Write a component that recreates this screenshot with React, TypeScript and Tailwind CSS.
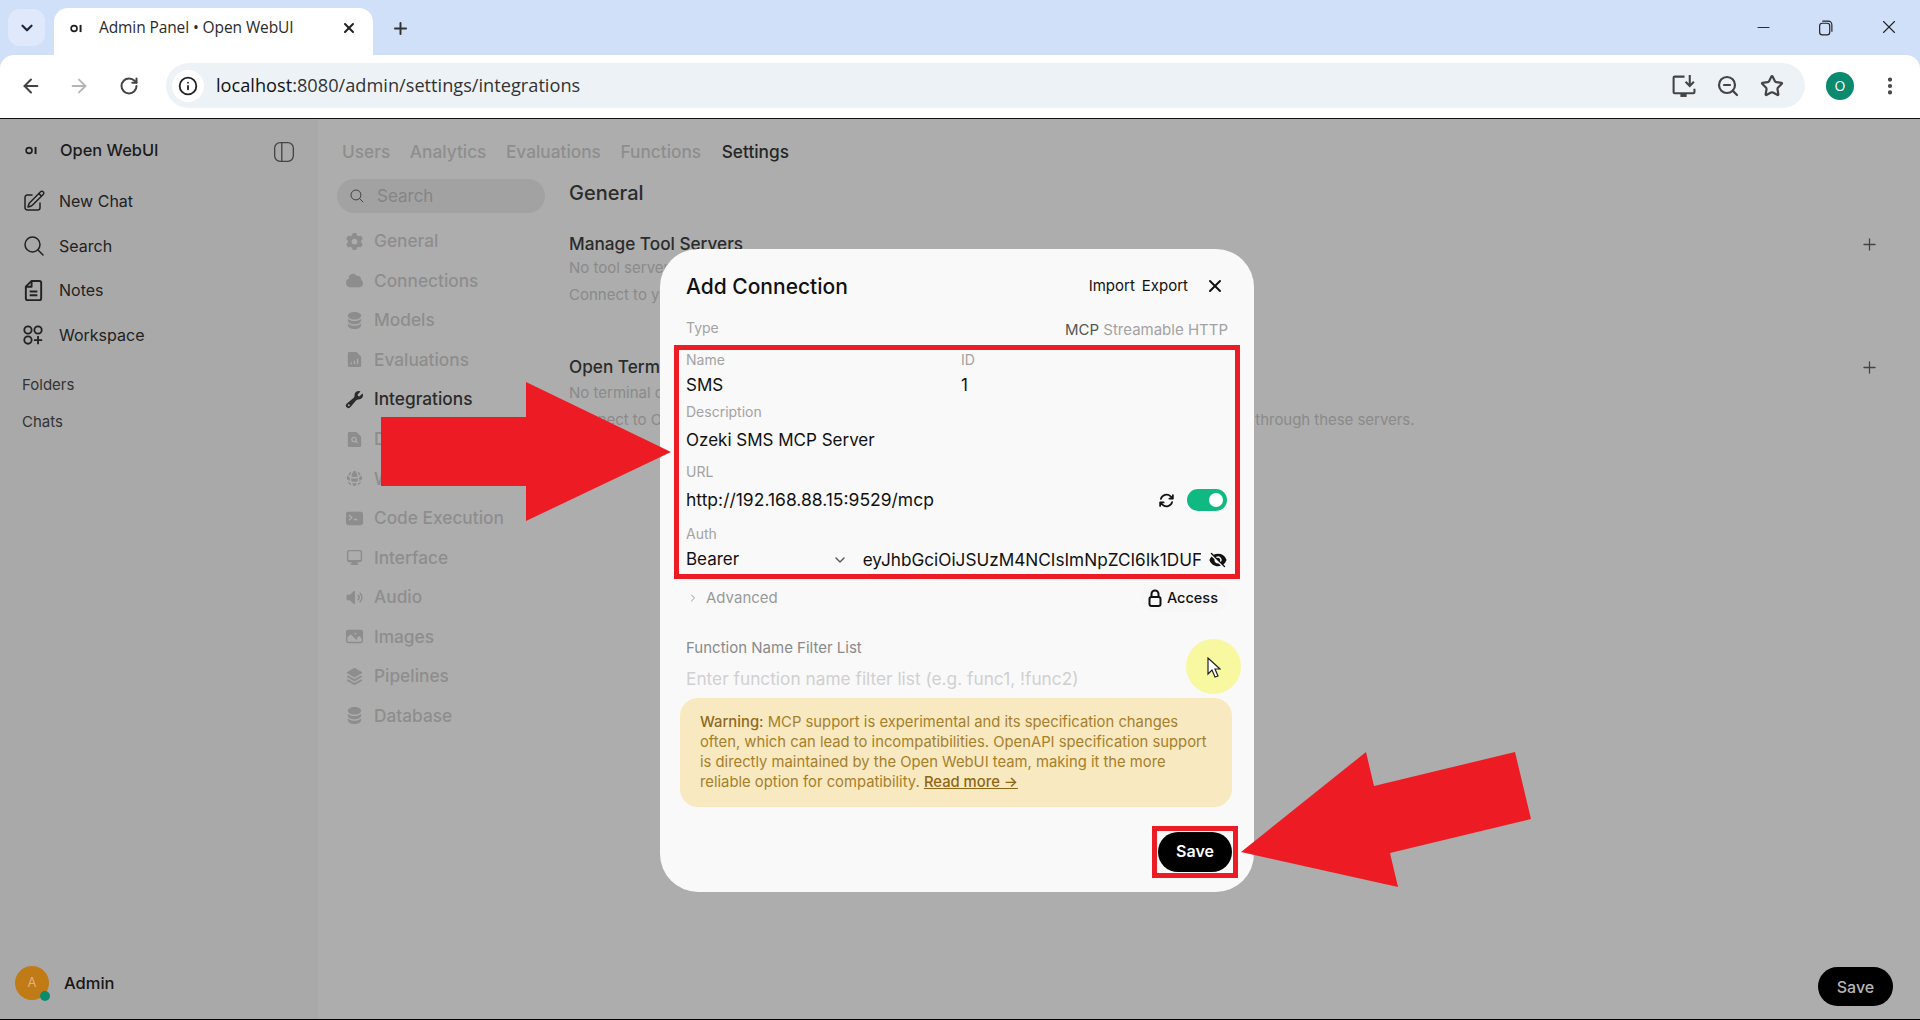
import { ArrowLeft, ArrowRight, ChevronDown, ChevronRight, Info, Minus, MoreVertical, Plus, RotateCw, Star, X, ZoomOut } from 'lucide-react';
import {
  HiMiniCircleStack,
  HiMiniCloud,
  HiMiniCog6Tooth,
  HiMiniCommandLine,
  HiMiniComputerDesktop,
  HiMiniDocumentChartBar,
  HiMiniDocumentMagnifyingGlass,
  HiMiniEyeSlash,
  HiMiniGlobeAlt,
  HiMiniPhoto,
  HiMiniSpeakerWave,
  HiMiniSquare3Stack3D,
  HiMiniWrench,
  HiOutlineArrowPath,
  HiOutlineMagnifyingGlass,
  HiOutlinePencilSquare,
} from 'react-icons/hi2';

function OiLogo({ className }: { className: string }) {
  return (
    <svg viewBox="0 0 16 10" className={className} fill="none" stroke="currentColor">
      <circle cx="5" cy="5" r="3.6" strokeWidth="2" />
      <path d="M13 0.6v8.8" strokeWidth="2.4" />
    </svg>
  );
}

const sideLinks = [
  { label: 'New Chat', icon: <HiOutlinePencilSquare className="size-[24px]" /> },
  { label: 'Search', icon: <HiOutlineMagnifyingGlass className="size-[24px]" /> },
  {
    label: 'Notes',
    icon: (
      <svg viewBox="0 0 20 24" className="size-[23px]" fill="none" stroke="currentColor" strokeWidth="2" strokeLinejoin="round">
        <path d="M8 2h8a2 2 0 0 1 2 2v16a2 2 0 0 1-2 2H4a2 2 0 0 1-2-2V8z" />
        <path d="M6 13h8M6 17h8M8 2v6H2" />
      </svg>
    ),
  },
  {
    label: 'Workspace',
    icon: (
      <svg viewBox="0 0 24 24" className="size-[22px]" fill="none" stroke="currentColor" strokeWidth="2">
        <circle cx="6.5" cy="6.5" r="4" />
        <circle cx="17.5" cy="6.5" r="4" />
        <circle cx="6.5" cy="17.5" r="4" />
        <path d="M17.5 13v9M13 17.5h9" />
      </svg>
    ),
  },
];

const settingsLinks = [
  { label: 'General', Icon: HiMiniCog6Tooth },
  { label: 'Connections', Icon: HiMiniCloud },
  { label: 'Models', Icon: HiMiniCircleStack },
  { label: 'Evaluations', Icon: HiMiniDocumentChartBar },
  { label: 'Integrations', Icon: HiMiniWrench, active: true },
  { label: 'Documents', Icon: HiMiniDocumentMagnifyingGlass },
  { label: 'Web Search', Icon: HiMiniGlobeAlt },
  { label: 'Code Execution', Icon: HiMiniCommandLine },
  { label: 'Interface', Icon: HiMiniComputerDesktop },
  { label: 'Audio', Icon: HiMiniSpeakerWave },
  { label: 'Images', Icon: HiMiniPhoto },
  { label: 'Pipelines', Icon: HiMiniSquare3Stack3D },
  { label: 'Database', Icon: HiMiniCircleStack },
];

function BrowserChrome() {
  return (
    <div className="bg-[#d0e0f8] font-['Open_Sans',sans-serif]">
      <div className="flex h-[55px] items-end">
        <div className="mb-[9px] ml-[8px] flex size-[37px] items-center justify-center rounded-[12px] bg-[#dfe9fb]">
          <ChevronDown className="size-[18px] text-[#1f2937]" strokeWidth={3} />
        </div>
        <div className="relative ml-[9px] flex h-[47px] w-[319px] items-center rounded-t-[14px] bg-white pb-[7px] pl-[16px] pr-[14px]">
          <OiLogo className="h-[11px] w-[13px] text-[#1f1f1f]" />
          <span className="ml-[16px] flex-1 whitespace-nowrap text-[15.5px] tracking-[-0.1px] text-[#2b2b2b]">Admin Panel • Open WebUI</span>
          <X className="mr-[2px] size-[16px] text-[#222]" strokeWidth={3} />
        </div>
        <div className="mb-[7px] ml-[18px] flex h-[40px] items-center">
          <Plus className="size-[19px] text-[#333]" strokeWidth={2.5} />
        </div>
        <div className="mb-[8px] ml-auto flex h-[40px] items-center gap-[44px] pr-[20px] text-[#222]">
          <Minus className="size-[19px]" strokeWidth={1.2} />
          <svg viewBox="0 0 16 16" className="size-[17px]" fill="none" stroke="currentColor" strokeWidth="1.1">
            <rect x="2.5" y="4" width="9.5" height="11" rx="2.5" />
            <path d="M5 2h5.5a3.5 3.5 0 0 1 3.5 3.5V12" />
          </svg>
          <X className="size-[22px]" strokeWidth={1.2} />
        </div>
      </div>
      <div className="flex h-[64px] items-center rounded-t-[14px] border-b border-[#111] bg-white pb-[2px] pl-[20px] pr-[18px]">
        <ArrowLeft className="size-[22px] text-[#444]" strokeWidth={2.2} />
        <ArrowRight className="ml-[26px] size-[22px] text-[#b5b5b5]" strokeWidth={2} />
        <RotateCw className="ml-[29px] size-[20px] text-[#444]" strokeWidth={2.4} />
        <div className="ml-[27px] flex h-[45px] w-[1639px] items-center rounded-full bg-[#edf2f7] pl-[6px] pr-[21px]">
          <div className="flex size-[32px] items-center justify-center rounded-full bg-white">
            <Info className="size-[20px] text-[#222]" strokeWidth={2.2} />
          </div>
          <span className="ml-[12px] whitespace-nowrap text-[18.2px] text-[#333]">
            <span className="text-[#111]">localhost</span>:8080/admin/settings/integrations
          </span>
          <div className="ml-auto flex items-center gap-[20px] text-[#444]">
            <svg viewBox="0 0 24 24" className="size-[25px]" fill="none" stroke="currentColor" strokeWidth="2">
              <path d="M13 3.5H3.5a1 1 0 0 0-1 1v14a1 1 0 0 0 1 1h18a1 1 0 0 0 1-1V15" />
              <path d="M9 21.5h6" strokeWidth="3" />
              <path d="M18 2v10M14 8.5l4 4 4-4" />
            </svg>
            <ZoomOut className="size-[24px]" strokeWidth={2.2} />
            <Star className="size-[24px]" strokeWidth={2.2} />
          </div>
        </div>
        <div className="ml-[21px] flex size-[28px] items-center justify-center rounded-full bg-[#0b8a6e] text-[14px] text-white">O</div>
        <MoreVertical className="ml-[25px] size-[22px] text-[#444]" strokeWidth={2.6} />
      </div>
    </div>
  );
}

function Sidebar() {
  return (
    <aside className="flex w-[318px] flex-col bg-[#a9a9a9] pl-[22px] text-[#222]">
      <div className="flex h-[62px] items-center pr-[23px] pt-[1px]">
        <OiLogo className="ml-[3px] h-[11px] w-[13px] text-[#1f1f1f]" />
        <span className="ml-[22px] text-[16.4px] font-medium text-[#1c1c1c]">Open WebUI</span>
        <svg viewBox="0 0 20 20" className="ml-auto mt-[3px] size-[22px] text-[#444]" fill="none" stroke="currentColor" strokeWidth="1.2">
          <rect x="1.5" y="1.5" width="17" height="17" rx="5" />
          <path d="M8 1.5v17" />
        </svg>
      </div>
      <nav className="mt-[-2px] flex flex-col">
        {sideLinks.map((link) => (
          <div key={link.label} className="flex h-[44.6px] items-center">
            <div className="flex w-[37px] items-center">{link.icon}</div>
            <span className="text-[16px] text-[#222]">{link.label}</span>
          </div>
        ))}
      </nav>
      <div className="mt-[18px] text-[15px] leading-[20px] text-[#333]">Folders</div>
      <div className="mt-[17px] text-[15px] leading-[20px] text-[#333]">Chats</div>
      <div className="mb-[19px] ml-[-7px] mt-auto flex items-center">
        <div className="relative flex size-[34px] items-center justify-center rounded-full bg-[#c07a16] text-[13px] text-[#e0b27a]">
          A
          <span className="absolute bottom-[-1px] right-[-1px] size-[10px] rounded-full bg-[#0b8a6e]" />
        </div>
        <span className="ml-[15px] text-[16.5px] font-medium text-[#161616]">Admin</span>
      </div>
    </aside>
  );
}

function MainPanel() {
  return (
    <main className="flex flex-1 flex-col bg-[#adadad] pl-[19px] pr-[41px] pt-[21px]">
      <div className="flex h-[24px] items-center gap-[19.5px] pl-[5px] text-[17.3px] font-medium text-[#8e8e8e]">
        <span>Users</span>
        <span>Analytics</span>
        <span>Evaluations</span>
        <span>Functions</span>
        <span className="ml-[1px] text-[#262626]">Settings</span>
      </div>
      <div className="mt-[15px] flex flex-1">
        <div className="w-[208px]">
          <div className="flex h-[34px] items-center rounded-full bg-[#a2a2a2] pl-[12px] text-[17px] text-[#858585]">
            <HiOutlineMagnifyingGlass className="size-[16px] text-[#444]" />
            <span className="ml-[12px] mt-[1px]">Search</span>
          </div>
          <div className="mt-[8.5px] flex flex-col">
            {settingsLinks.map(({ label, Icon, active }) => (
              <div key={label} className={`flex h-[39.55px] items-center pl-[8px] text-[17.3px] font-medium ${active ? 'text-[#2b2b2b]' : 'text-[#8d8d8d]'}`}>
                <Icon className="size-[19px]" />
                <span className="ml-[10px]">{label}</span>
              </div>
            ))}
          </div>
        </div>
        <div className="ml-[24px] flex-1">
          <div className="text-[20px] font-medium leading-[28px] text-[#2b2b2b]">General</div>
          <div className="mt-[25px] flex h-[24px] items-center justify-between text-[17.2px] font-medium text-[#2b2b2b]">
            <span>Manage Tool Servers</span>
            <Plus className="size-[19px] text-[#444]" strokeWidth={1.6} />
          </div>
          <div className="mt-[2px] text-[15px] leading-[20px] text-[#8a8a8a]">No tool servers connected yet.</div>
          <div className="mt-[7px] text-[15px] leading-[20px] text-[#8a8a8a]">Connect to your OpenAPI tool servers.</div>
          <div className="mt-[50px] flex h-[24px] items-center justify-between text-[17.2px] font-medium text-[#2b2b2b]">
            <span>Open Terminal</span>
            <Plus className="size-[19px] text-[#444]" strokeWidth={1.6} />
          </div>
          <div className="mt-[4px] text-[15px] leading-[20px] text-[#8a8a8a]">No terminal connections configured.</div>
          <div className="mt-[7px] whitespace-nowrap text-[15px] leading-[20px] tracking-[-0.04px] text-[#8a8a8a]">
            Connect to Open Terminal instances to give all users and models remote access to environments through these servers.
          </div>
        </div>
      </div>
    </main>
  );
}

function ConnectionModal() {
  return (
    <div className="absolute left-[660px] top-[249px] flex h-[643px] w-[594px] flex-col rounded-[38px] bg-[#f9f9f9] px-[26px] pt-[23px] text-[#111]">
      <div className="flex h-[28px] items-center">
        <span className="mt-[1px] text-[21px] font-medium">Add Connection</span>
        <span className="ml-auto text-[15px]">Import</span>
        <span className="ml-[7px] text-[15px]">Export</span>
        <X className="ml-[17px] mr-[3px] size-[20px]" strokeWidth={2.4} />
      </div>
      <div className="mt-[17px] flex h-[20px] items-start justify-between text-[14px] text-[#a3a3a3]">
        <span>Type</span>
        <span className="mt-[2px] text-[15px]">
          <span className="text-[#555]">MCP</span> Streamable HTTP
        </span>
      </div>

      <div className="mx-[-12px] mt-[8px] h-[234px] border-[5px] border-[#ed1c24] pl-[7px] pr-[8px]">
        <div className="flex h-[18px] items-center text-[14px] text-[#a3a3a3]">
          <span className="w-[275px]">Name</span>
          <span>ID</span>
        </div>
        <div className="mt-[6px] flex h-[24px] items-center text-[17px]">
          <span className="w-[275px]">SMS</span>
          <span>1</span>
        </div>
        <div className="mt-[4px] flex h-[18px] items-center text-[14px] text-[#a3a3a3]">Description</div>
        <div className="mt-[9px] flex h-[24px] items-center text-[17px]">Ozeki SMS MCP Server</div>
        <div className="mt-[9px] flex h-[18px] items-center text-[14px] text-[#a3a3a3]">URL</div>
        <div className="mt-[8px] flex h-[24px] items-center text-[17.5px]">
          <span>http://192.168.88.15:9529/mcp</span>
          <HiOutlineArrowPath className="ml-auto size-[17px]" strokeWidth={2.4} />
          <div className="ml-[12px] flex h-[22px] w-[40px] items-center justify-end rounded-full bg-[#10b981] pr-[4px]">
            <span className="size-[14px] rounded-full bg-white" />
          </div>
        </div>
        <div className="mt-[12px] flex h-[18px] items-center text-[14px] text-[#a3a3a3]">Auth</div>
        <div className="mt-[6px] flex h-[24px] items-center text-[17px]">
          <div className="flex w-[177px] items-center pr-[15px]">
            <span>Bearer</span>
            <ChevronDown className="ml-auto size-[16px] text-[#555]" strokeWidth={2} />
          </div>
          <span className="w-[339px] overflow-hidden whitespace-nowrap text-[17.2px]">eyJhbGciOiJSUzM4NCIsImNpZCI6Ik1DUF</span>
          <HiMiniEyeSlash className="ml-[8px] size-[18px]" />
        </div>
      </div>

      <div className="mt-[5px] flex h-[28px] items-center">
        <ChevronRight className="ml-[1px] size-[12px] text-[#999]" strokeWidth={2} />
        <span className="ml-[7px] text-[15px] text-[#9a9a9a]">Advanced</span>
        <div className="ml-auto flex h-[28px] items-center rounded-full bg-[#f7f7f7] pl-[7px] pr-[10px] text-[14.5px] font-medium">
          <svg viewBox="0 0 14 18" className="h-[18px] w-[14px]" fill="none" stroke="currentColor" strokeWidth="2">
            <path d="M3.5 8V5a3.5 3.5 0 0 1 7 0v3" />
            <rect x="1.5" y="8" width="11" height="9" rx="2" />
          </svg>
          <span className="ml-[5px]">Access</span>
        </div>
      </div>

      <div className="mt-[26px] flex h-[20px] items-center text-[15px] text-[#8a8a8a]">Function Name Filter List</div>
      <div className="mt-[9px] flex h-[24px] items-center whitespace-nowrap text-[17.3px] text-[#d0d0d0]">Enter function name filter list (e.g. func1, !func2)</div>

      <div className="ml-[-6px] mr-[-4px] mt-[7px] h-[109px] whitespace-nowrap rounded-[18px] bg-[#f8e9c0] pl-[20px] pt-[14px] text-[14.8px] leading-[20px] text-[#a67f2c]">
        <span className="font-medium text-[#8f6a1e]">Warning:</span> MCP support is experimental and its specification changes
        <br />
        often, which can lead to incompatibilities. OpenAPI specification support
        <br />
        is directly maintained by the Open WebUI team, making it the more
        <br />
        reliable option for compatibility. <span className="font-medium text-[#8f6614] underline">Read more →</span>
      </div>

      <div className="mr-[-10px] mt-[19px] h-[52px] w-[86px] self-end border-[5px] border-[#ed1c24] p-[1px]">
        <div className="flex h-full items-center justify-center rounded-full bg-black pb-[2px] text-[16px] font-semibold text-white">Save</div>
      </div>
    </div>
  );
}

export default function App() {
  return (
    <div className="relative flex h-[1020px] w-[1920px] flex-col overflow-hidden border-b border-black font-['Inter',sans-serif]">
      <BrowserChrome />
      <div className="relative flex flex-1">
        <Sidebar />
        <MainPanel />
        <div className="absolute bottom-[13px] right-[27px] flex h-[39px] w-[75px] items-center justify-center rounded-full bg-black text-[16px] font-medium text-[#b5b5b5]">Save</div>
      </div>
      <ConnectionModal />

      {/* cursor highlight from the screen recording */}
      <div className="absolute left-[1186px] top-[639px] size-[55px] rounded-full bg-[#f7f8a0]" />
      <svg viewBox="0 0 14 22" className="absolute left-[1207px] top-[657px] h-[22px] w-[14px]" fill="#fff" stroke="#222" strokeWidth="1.2">
        <path d="M1 1v16l4-4 3 7 3-1-3-7h5z" />
      </svg>

      {/* annotation arrows drawn over the recording */}
      <svg viewBox="0 0 1920 1020" className="pointer-events-none absolute inset-0 h-[1020px] w-[1920px]" fill="#ed1c24">
        <polygon points="381,417 526,417 526,382 671,452 526,521 526,486 381,486" />
        <polygon points="1241,852 1366,752 1374,786 1515,752 1531,819 1390,853 1398,887" />
      </svg>
    </div>
  );
}
